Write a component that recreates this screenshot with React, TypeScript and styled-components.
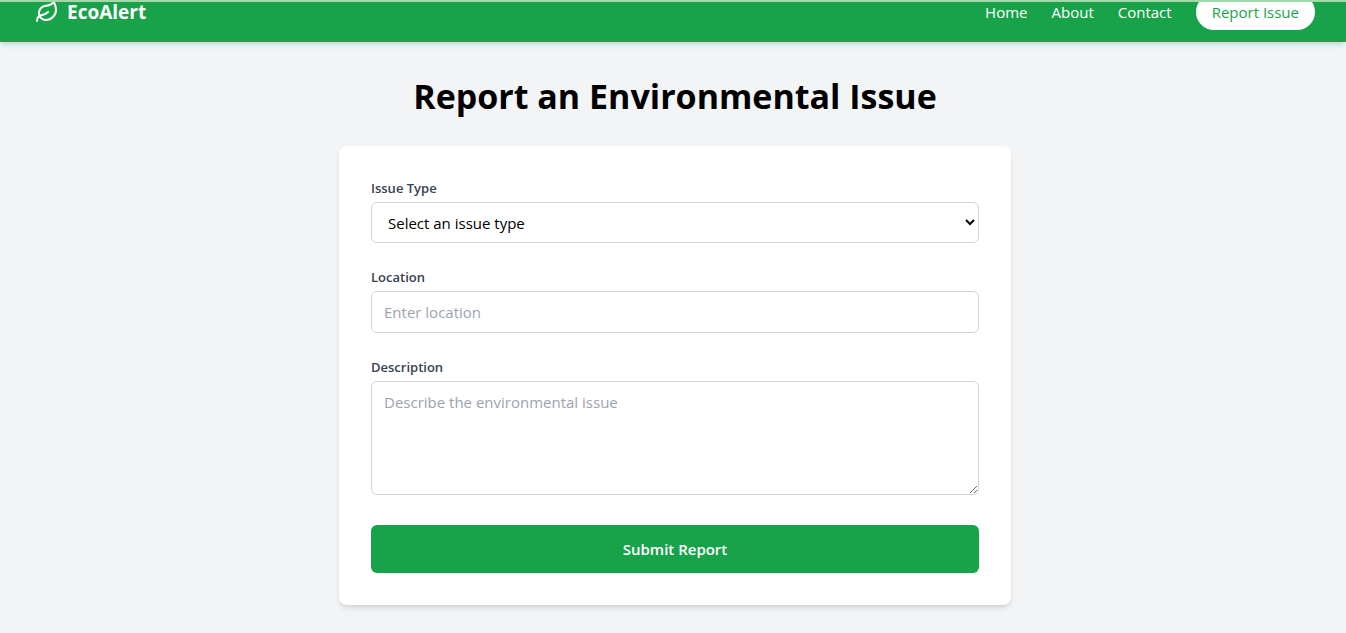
import React from "react";
import styled, { createGlobalStyle } from "styled-components";
import { Leaf } from "lucide-react";

const GlobalStyle = createGlobalStyle`
  *, *::before, *::after { box-sizing: border-box; }
  body {
    margin: 0;
    background: #f3f4f6;
    color: #000;
    font-family: "Segoe UI", "Open Sans", "Noto Sans", sans-serif;
    font-size: 15px;
    line-height: 24px;
  }
`;

const Header = styled.header`
  display: flex;
  align-items: flex-end;
  height: 42px;
  padding: 0 0 12px 4px;
  overflow: hidden;
  border-top: 2px solid #a3d8a8;
  background: #18a34a;
  color: #fff;
  box-shadow: 0 4px 6px -1px rgba(0, 0, 0, 0.1), 0 2px 4px -2px rgba(0, 0, 0, 0.1);
`;

const HeaderInner = styled.div`
  display: flex;
  align-items: center;
  justify-content: space-between;
  width: 100%;
  max-width: 1280px;
  margin: 0 auto;
`;

const Brand = styled.a`
  display: flex;
  align-items: center;
  gap: 8px;
  color: inherit;
  font-size: 19px;
  line-height: 20px;
  font-weight: 700;
  text-decoration: none;
`;

const Nav = styled.nav`
  display: flex;
  align-items: center;
  gap: 24px;
`;

const NavLink = styled.a<{ $pill?: boolean }>`
  padding: ${(p) => (p.$pill ? "6px 16px" : "0")};
  border-radius: 18px;
  background: ${(p) => (p.$pill ? "#fff" : "transparent")};
  color: ${(p) => (p.$pill ? "#18a34a" : "#fff")};
  text-decoration: none;
`;

const Main = styled.main`
  display: flex;
  flex-direction: column;
  align-items: center;
  padding: 34px 0 28px 4px;
`;

const Title = styled.h1`
  margin: 0 0 30px;
  font-size: 34px;
  line-height: 40px;
  font-weight: 700;
  text-align: center;
`;

const Card = styled.form`
  display: flex;
  flex-direction: column;
  gap: 24px;
  width: 100%;
  max-width: 672px;
  padding: 32px;
  border-radius: 8px;
  background: #fff;
  box-shadow: 0 4px 6px -1px rgba(0, 0, 0, 0.1), 0 2px 4px -2px rgba(0, 0, 0, 0.1);
`;

const Field = styled.div`
  display: flex;
  flex-direction: column;
  gap: 4px;
`;

const Label = styled.label`
  color: #374151;
  font-size: 13px;
  line-height: 20px;
  font-weight: 600;
`;

const controlStyle = `
  width: 100%;
  border: 1px solid #d1d5db;
  border-radius: 6px;
  background: #fff;
  color: #000;
  font: inherit;
  &::placeholder { color: #9ca3af; opacity: 1; }
`;

const Select = styled.select`
  ${controlStyle}
  height: 41px;
  padding: 8px 12px;
`;

const Input = styled.input`
  ${controlStyle}
  height: 42px;
  padding: 8px 12px;
`;

const TextArea = styled.textarea`
  ${controlStyle}
  display: block;
  height: 114px;
  margin-bottom: 6px;
  padding: 8px 12px;
  resize: vertical;
`;

const Submit = styled.button`
  width: 100%;
  padding: 12px 24px;
  border: 0;
  border-radius: 6px;
  background: #18a34a;
  color: #fff;
  font: inherit;
  font-weight: 600;
  cursor: pointer;
`;

export default function App() {
  return (
    <>
      <GlobalStyle />
      <Header>
        <HeaderInner>
          <Brand href="#home">
            <Leaf size={24} aria-hidden="true" />
            EcoAlert
          </Brand>
          <Nav>
            <NavLink href="#home">Home</NavLink>
            <NavLink href="#about">About</NavLink>
            <NavLink href="#contact">Contact</NavLink>
            <NavLink href="#report" $pill>Report Issue</NavLink>
          </Nav>
        </HeaderInner>
      </Header>
      <Main>
        <Title>Report an Environmental Issue</Title>
        <Card onSubmit={(e) => e.preventDefault()}>
          <Field>
            <Label htmlFor="type">Issue Type</Label>
            <Select id="type" defaultValue="">
              <option value="">Select an issue type</option>
            </Select>
          </Field>
          <Field>
            <Label htmlFor="location">Location</Label>
            <Input id="location" type="text" placeholder="Enter location" />
          </Field>
          <Field>
            <Label htmlFor="description">Description</Label>
            <TextArea id="description" placeholder="Describe the environmental issue" />
          </Field>
          <Submit type="submit">Submit Report</Submit>
        </Card>
      </Main>
    </>
  );
}
